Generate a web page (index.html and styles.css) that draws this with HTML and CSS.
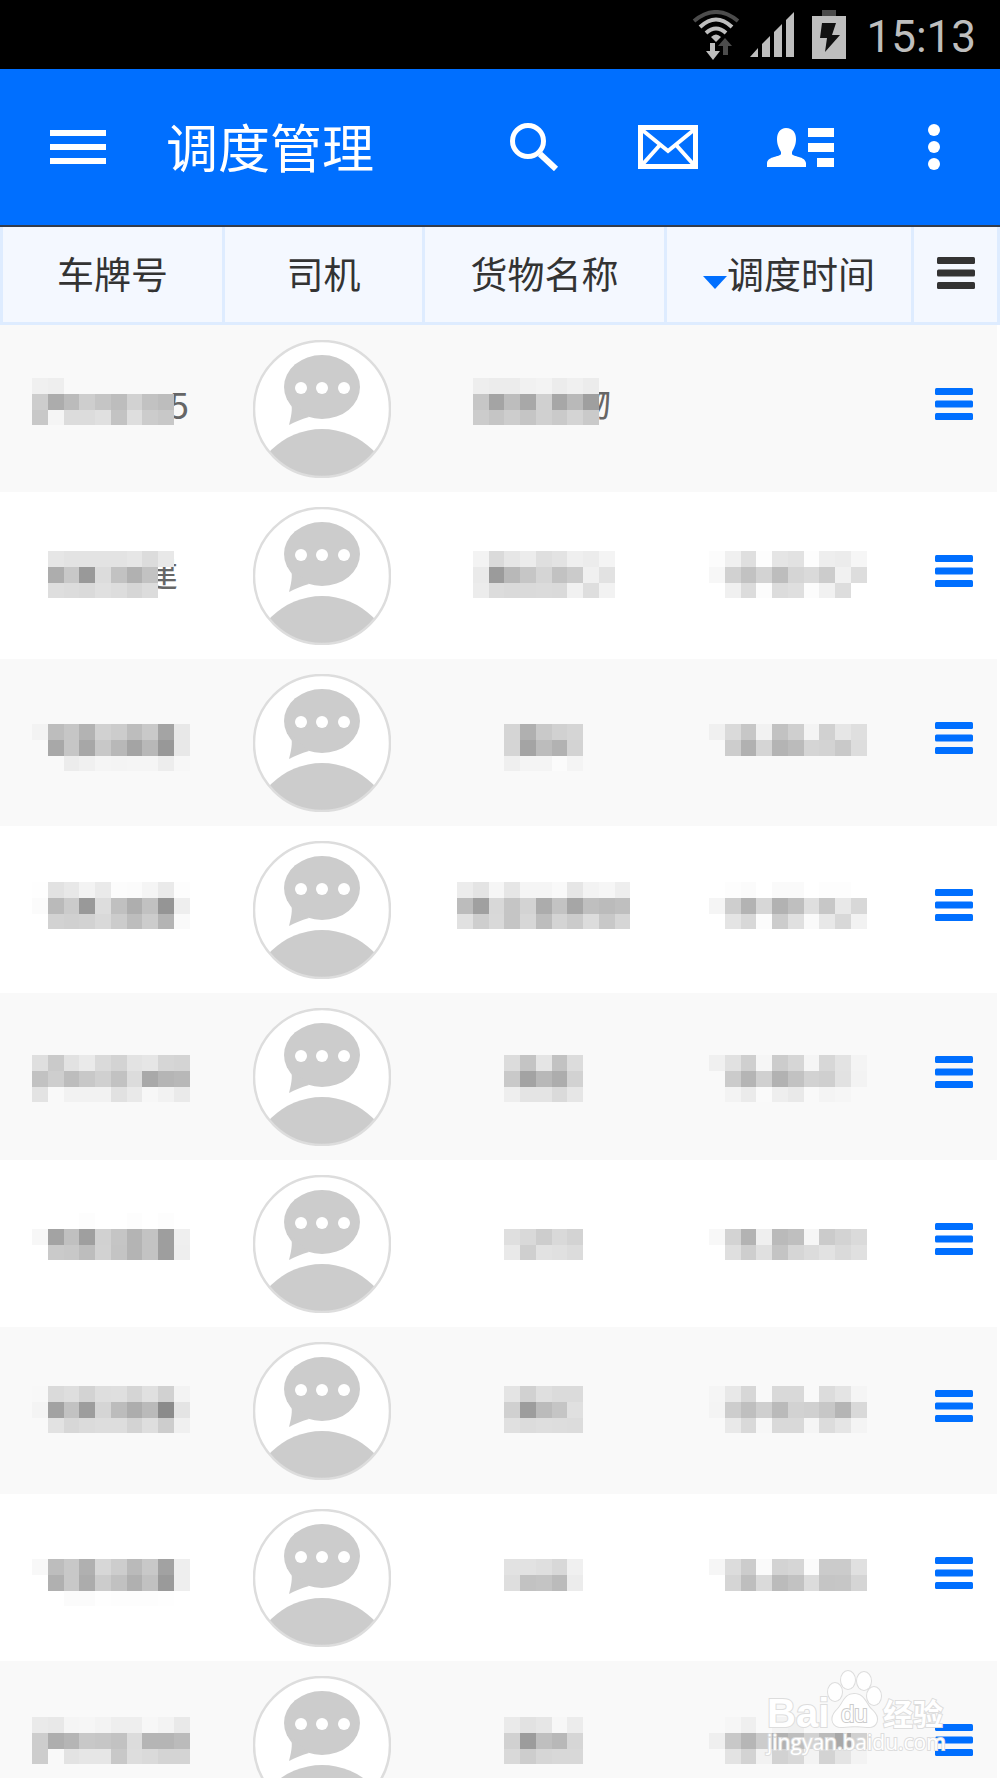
FILE: index.html
```html
<!DOCTYPE html>
<html lang="zh-CN">
<head>
    <meta charset="UTF-8">
    <meta name="viewport" content="width=device-width, initial-scale=1.0">
    <title>调度管理</title>
    <link rel="stylesheet" href="styles.css">
</head>
<body>
    <svg class="sprite" aria-hidden="true">
        <clipPath id="face"><circle cx="69" cy="69" r="68"/></clipPath>
        <symbol id="avatar" viewBox="0 0 138 138">
            <circle cx="69" cy="69" r="68" fill="#fff"/>
            <ellipse cx="69" cy="47" rx="38" ry="32" fill="#ccc"/>
            <path d="M37 60 C40 66 39 74 36 85 C42 82 48 79 56 77 Z" fill="#ccc"/>
            <circle cx="48" cy="48" r="6" fill="#fff"/>
            <circle cx="69" cy="48" r="6" fill="#fff"/>
            <circle cx="91" cy="48" r="6" fill="#fff"/>
            <circle cx="69" cy="161" r="72" fill="#ccc" clip-path="url(#face)"/>
            <circle cx="69" cy="69" r="68" fill="none" stroke="#ddd" stroke-width="2.5"/>
        </symbol>
        <symbol id="bars" viewBox="0 0 38 32">
            <rect width="38" height="7" rx="1.5"/>
            <rect y="12.5" width="38" height="7" rx="1.5"/>
            <rect y="25" width="38" height="7" rx="1.5"/>
        </symbol>
    </svg>

    <div class="app">
        <div class="status-bar">
            <svg width="48" height="50" viewBox="0 0 48 50" fill="none" stroke="#bebebe" aria-hidden="true">
                <path d="M2 11 Q24 -7 46 11" stroke="#4c4c4c" stroke-width="4"/>
                <path d="M8 17 Q24 2 40 17" stroke-width="4"/>
                <path d="M14 23 Q24 14 34 23" stroke-width="4"/>
                <path d="M19 27 Q24 22 29 27 L24 32 Z" fill="#bebebe" stroke="none"/>
                <path d="M18 33h5v8h5l-7 9-7-9h4z" fill="#bebebe" stroke="none"/>
                <path d="M31 45h5v-9h4l-7-8-7 8h5z" fill="#4c4c4c" stroke="none"/>
            </svg>
            <svg width="44" height="45" viewBox="0 0 44 45" fill="#bebebe" aria-hidden="true">
                <path d="M0 45L8 36v9zM12 45V32l8-8v21zM24 45V20l8-8v33zM36 45V8l8-8v45z"/>
            </svg>
            <svg class="battery" width="34" height="49" viewBox="0 0 34 49" aria-hidden="true">
                <path d="M10 0h14v6h-14z" fill="#4c4c4c"/>
                <path d="M0 6h34v43h-34z" fill="#bebebe"/>
                <path d="M10 13h14l-4 12h8L13 42l2-14H8z" fill="#111"/>
            </svg>
            <span class="clock">15:13</span>
        </div>

        <header class="toolbar">
            <button class="tool menu" aria-label="菜单">
                <svg width="56" height="34" viewBox="0 0 56 34"><path d="M0 0h56v6H0zM0 14h56v6H0zM0 28h56v6H0z"/></svg>
            </button>
            <h1>调度管理</h1>
            <button class="tool" aria-label="搜索">
                <svg width="50" height="48" viewBox="0 0 50 48" fill="none" stroke="#fff">
                    <circle cx="18" cy="18" r="15.5" stroke-width="5"/>
                    <path d="M30 31L46 46" stroke-width="6"/>
                </svg>
            </button>
            <button class="tool" aria-label="消息">
                <svg width="60" height="44" viewBox="0 0 60 44" fill="none" stroke="#fff" stroke-width="5">
                    <path d="M2.5 2.5h55v39h-55z"/>
                    <path d="M3 4L30 26L57 4M4 40L21 21M56 40L39 21" stroke-width="4"/>
                </svg>
            </button>
            <button class="tool" aria-label="联系人">
                <svg width="67" height="39" viewBox="0 0 67 39">
                    <path d="M19 0C26 0 29 5 29 11C29 17 27 20 25 24V26C26 29 38 28 39 35V39H0V35C1 28 13 29 14 26V24C12 20 10 17 10 11C10 5 13 0 19 0Z"/>
                    <path d="M41 0h26v9H41zM41 15h26v9H41zM50 30h17v9H50z"/>
                </svg>
            </button>
            <button class="tool" aria-label="更多">
                <svg width="12" height="46" viewBox="0 0 12 46">
                    <circle cx="6" cy="6" r="6"/><circle cx="6" cy="23" r="6"/><circle cx="6" cy="40" r="6"/>
                </svg>
            </button>
        </header>

        <main class="list">
            <table>
                <colgroup>
                    <col class="col-plate"><col class="col-driver"><col class="col-goods"><col class="col-time"><col>
                </colgroup>
                <thead>
                    <tr>
                        <th>车牌号</th>
                        <th>司机</th>
                        <th>货物名称</th>
                        <th><span class="sort">调度时间</span></th>
                        <th><button class="more" aria-label="列设置"><svg><use href="#bars"/></svg></button></th>
                    </tr>
                </thead>
                <tbody id="rows"></tbody>
            </table>
        </main>

        <svg class="watermark" width="190" height="92" viewBox="0 0 190 92" aria-label="Baidu经验">
            <text class="wm-logo" x="3" y="58">Bai</text>
            <g class="paw">
                <ellipse cx="71" cy="23" rx="7" ry="9"/>
                <ellipse cx="84" cy="11" rx="7" ry="9"/>
                <ellipse cx="100" cy="12" rx="7" ry="9"/>
                <ellipse cx="110" cy="27" rx="7" ry="9"/>
                <path d="M90 25C101 25 102 36 108 41C117 49 113 59 103 58C94 57 88 57 79 58C69 59 65 50 72 42C79 36 80 25 90 25Z"/>
            </g>
            <text class="wm-du" x="77" y="53">du</text>
            <text class="wm-cn" x="119" y="56">经验</text>
            <text class="wm-url" x="3" y="81">jingyan.baidu.com</text>
        </svg>
    </div>

    <script src="app.js"></script>
</body>
</html>
```

FILE: styles.css
```css
* {
    box-sizing: border-box;
}
body {
    margin: 0;
    background: #fff;
    color: #333;
    font-family: 'Noto Sans CJK SC', sans-serif;
}
button {
    padding: 0;
    border: none;
    background: none;
    cursor: pointer;
}
.sprite {
    position: absolute;
    width: 0;
    height: 0;
}
.app {
    position: relative;
    display: flex;
    flex-direction: column;
    height: 100vh;
    overflow: hidden;
}

/* status bar */
.status-bar {
    display: flex;
    flex: none;
    align-items: center;
    justify-content: flex-end;
    gap: 10px;
    height: 69px;
    padding-right: 24px;
    background: #000;
}
.battery {
    margin: 0 10px 0 8px;
}
.clock {
    padding-top: 4px;
    color: #bebebe;
    font-family: Roboto, sans-serif;
    font-size: 44px;
    line-height: 64px;
}

/* toolbar */
.toolbar {
    display: flex;
    flex: none;
    align-items: center;
    height: 158px;
    border-bottom: 2px solid #333c4c;
    background: #006fff;
    color: #fff;
}
.toolbar h1 {
    flex: 1;
    margin: 0;
    padding: 0 0 2px 10px;
    font-size: 52px;
    font-weight: 400;
    line-height: 64px;
    white-space: nowrap;
}
.tool {
    display: flex;
    align-items: center;
    justify-content: center;
    width: 133px;
    height: 100%;
    fill: #fff;
}
.menu {
    width: 156px;
}

/* table */
.list {
    flex: 1;
    min-height: 0;
    overflow-y: auto;
    scrollbar-width: none;
}
table {
    width: 100%;
    table-layout: fixed;
    border-collapse: separate;
    border-spacing: 0;
}
.col-plate {
    width: 22.2%;
}
.col-driver {
    width: 20%;
}
.col-goods {
    width: 24.2%;
}
.col-time {
    width: 24.7%;
}
th {
    height: 98px;
    padding: 0 0 4px;
    border-left: 3px solid #deecff;
    border-bottom: 3px solid #deecff;
    background: #f4f8ff;
    font-size: 37px;
    font-weight: 400;
    line-height: 48px;
    white-space: nowrap;
}
th:last-child {
    border-right: 3px solid #deecff;
}
.sort::before {
    content: "";
    display: inline-block;
    border: 12px solid transparent;
    border-top: 13px solid #006fff;
    border-bottom: none;
}
td {
    height: 167px;
    padding: 0;
    text-align: center;
}
tbody tr:nth-child(odd) {
    background: #f9f9f9;
}
td:last-child {
    padding-bottom: 10px;
    border-right: 3px solid #fff;
}
td svg,
th svg {
    display: block;
    margin: 0 auto;
}
.avatar {
    width: 138px;
    height: 138px;
}
.more {
    display: block;
    margin: 0 auto;
}
.more svg {
    width: 38px;
    height: 32px;
    fill: #333;
}
td .more svg {
    fill: #006fff;
}
.mosaic text {
    fill: #666;
    font-size: 36px;
}

/* watermark */
.watermark {
    position: absolute;
    right: 46px;
    bottom: 17px;
    fill: #fff;
    stroke: #ddd;
    stroke-width: 2px;
    paint-order: stroke;
    pointer-events: none;
}
.wm-logo {
    font: bold 40px 'Liberation Sans', sans-serif;
}
.wm-du {
    stroke: #ccc;
    font: 24px 'Liberation Sans', sans-serif;
}
.wm-cn {
    font: bold 30px 'Noto Sans CJK SC', sans-serif;
}
.wm-url {
    font: 21px 'Open Sans', sans-serif;
}
```

FILE: app.js
```js
// hidden values, one grey level per tile, ".." leaves a tile empty
const rows = [
    {
        top: 53,
        plate: ["f0 ee", "cd ac bb ce c5 bd d2 c2 bd", "c8 f5 dc dc e0 c3 de cc c8"],
        plateText: ["5", 137, 94],
        goods: [".. ee ec ec f1 f3 ec f0 ec", ".. c6 a4 bd a8 d0 a7 b9 9f", ".. cc c5 cd c5 d0 ca d4 ca"],
        goodsText: ["物", 118, 92],
        time: []
    },
    {
        top: 59,
        plate: [".. e6 e3 e3 e3 e3 e6 dc e8", ".. ad c8 99 dc c2 b1 c2", ".. de dc da e0 dd d6 dc"],
        plateText: ["建", 110, 95],
        goods: [".. f3 da e6 ec df e3 ef ec f4", ".. ea 9b b8 c6 d5 c2 cb f0 e2", ".. ec dc da da db da f1 de f2"],
        time: ["fc f0 df fd e5 e2 fd ee ec f6", "f7 d1 c2 d3 bd d5 da cc f1 dd", ".. f0 dc fc dc df fc f1 dd"]
    },
    {
        top: 65,
        plate: ["f3 bd c6 b3 d1 cc bd c9 a4 e8", ".. a8 c6 a7 c8 b8 a4 b8 98 e8", ".. .. ec f0 f5 f4 f5 f5 ed f7"],
        goods: [".. .. .. d5 b0 c9 d1 d5", ".. .. .. d5 a4 bc b2 d3", ".. .. .. ef f4 f4 fb f4"],
        time: ["f0 da c7 f2 c2 cf f4 d1 e6 df", ".. cd b1 d5 b4 bb d5 d3 c9 dd"]
    },
    {
        top: 56,
        plate: ["fe e2 e8 f3 ea fc fb f5 ea fd", "fb ba cb 99 dd c0 ae c1 95 ee", ".. d2 d0 d2 d9 cc bd cc b4 fa"],
        goods: ["ec e4 f6 e6 f5 f5 f9 e6 f3 f6 ee", "bc a0 d8 c5 d3 ac c3 a6 bf bb bf", "e1 ce d9 c5 d7 bd d4 cb dc c8 d6"],
        time: [".. fd fb .. fa fa .. fd fd", "f5 ce b3 d7 b2 bf df c7 e8 d8", ".. e4 d8 fc cc e0 fa e8 d8 f2"]
    },
    {
        top: 62,
        plate: ["df ca e2 ea da d3 e3 e6 d6 d4", "c2 ce bd c8 d0 c2 dc a9 b5 b8", "e3 f9 f2 f2 f2 e1 e9 f7 f2 ea"],
        goods: [".. .. .. dc c4 e5 c2 dc", ".. .. .. c9 a3 b8 ad d2", ".. .. .. ee e4 e4 da e6"],
        time: ["f0 e1 cf f6 cc d6 f5 d7 e3 f4", ".. cb b5 d0 b2 c2 d2 cf e2 f3", ".. f3 eb fa ee e9 f9 f4 f6"]
    },
    {
        top: 53,
        plate: [".. .. .. fd .. .. fd .. fd", "f7 a3 c0 9f d1 c5 b4 c3 9e ef", ".. ca c8 bd d2 c4 b4 c3 9e ee"],
        goods: ["", ".. .. .. df d9 cd d9 d3", ".. .. .. e9 cf e2 e0 dc"],
        time: ["", "f8 d3 b3 ef ba bf f6 cb d3 da", ".. df ce e0 c4 d6 dc e2 da e0"]
    },
    {
        top: 59,
        plate: ["f8 da de d3 de df d5 e0 d1 f3", "f4 a2 c2 9d d5 bc ad ba 8b e4", ".. e2 d7 db dd dd d3 de cd f0"],
        goods: [".. .. .. e4 d1 df db db", ".. .. .. d0 9d bb c5 e0", ".. .. .. e0 dc de dd dc"],
        time: ["f5 e8 d7 f9 d9 d9 f9 dc e4 f5", "f4 cd bf cf ba d2 d0 c7 b5 d9", ".. e9 d9 f7 d9 d9 f5 dc e5 f4"]
    },
    {
        top: 65,
        plate: ["f8 bd c8 b0 d7 cd ba c8 a2 ee", ".. b0 c8 ac cc c1 b0 c1 9a ee", ".. .. fb fb fe fd fd fd fe"],
        goods: [".. .. .. e2 e2 df d8 f0", ".. .. .. de c2 c4 bb ec"],
        time: ["f6 dc cc fa d3 d6 fb cb cb e0", ".. d5 be da bb c2 dc c5 c6 d5"]
    },
    {
        top: 56,
        plate: ["ea e8 f5 f6 f3 ee ee f7 f3 e9", "cd ae b5 c8 c6 c2 dc b5 b5 bb", "cd f9 e3 e6 e6 c8 dd da d4 d4"],
        goods: [".. .. .. ea e2 e6 f7 ec", ".. .. .. d1 9c bf b8 d6", ".. .. .. d9 cd d6 d8 d8"],
        time: [".. f6 ef .. f3 f0", "ef c8 b6 cc b2 be d2 bb a8 d0", ".. e3 d3 f2 d2 d8 f3 d3 e4 f3"]
    }
];

function mosaic(lines, top, cols, text) {
    const step = n => Math.round(n * 63 / 4);
    let out = text ? `<text x="${text[1]}" y="${text[2]}">${text[0]}</text>` : "";
    lines.forEach((line, r) => {
        line.split(" ").forEach((grey, c) => {
            if (!grey || grey === "..") return;
            const x = step(c), y = step(r);
            out += `<rect x="${x}" y="${top + y}" width="${step(c + 1) - x}" height="${step(r + 1) - y}" fill="#${grey.repeat(3)}"/>`;
        });
    });
    return `<svg class="mosaic" width="${step(cols)}" height="167" aria-hidden="true">${out}</svg>`;
}

document.getElementById("rows").innerHTML = rows.map(row => `
    <tr>
        <td>${mosaic(row.plate, row.top, 10, row.plateText)}</td>
        <td><svg class="avatar"><use href="#avatar"/></svg></td>
        <td>${mosaic(row.goods, row.top, 11, row.goodsText)}</td>
        <td>${mosaic(row.time, row.top, 10)}</td>
        <td><button class="more" aria-label="操作"><svg><use href="#bars"/></svg></button></td>
    </tr>
`).join("");
```
